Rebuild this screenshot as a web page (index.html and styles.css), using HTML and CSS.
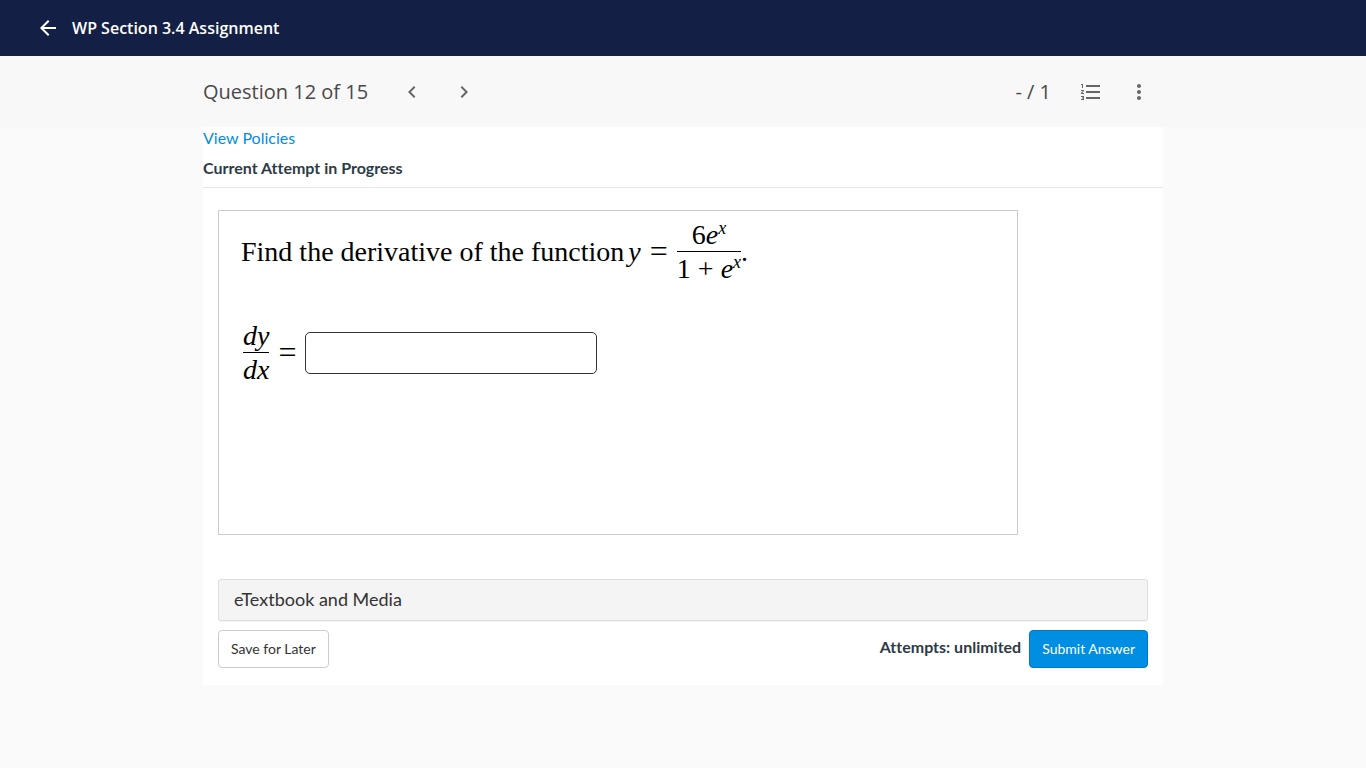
FILE: index.html
```html
<!DOCTYPE html>
<html lang="en">
<head>
<meta charset="utf-8">
<meta name="viewport" content="width=device-width, initial-scale=1">
<title>WP Section 3.4 Assignment</title>
<link rel="stylesheet" href="styles.css">
</head>
<body>
<header class="topbar">
  <a class="back" href="#" aria-label="Back">
    <svg class="icon" viewBox="0 0 24 24"><path d="M20 11H7.83l5.59-5.59L12 4l-8 8 8 8 1.41-1.41L7.83 13H20v-2z"/></svg>
  </a>
  <h1 class="topbar-title">WP Section 3.4 Assignment</h1>
</header>
<nav class="questionbar" aria-label="Question navigation">
  <div class="questionbar-inner">
    <h2 class="question-title">Question 12 of 15</h2>
    <button class="icon-button previous" type="button" aria-label="Previous question">
      <svg class="icon" viewBox="0 0 24 24"><path d="M15.41 7.41L14 6l-6 6 6 6 1.41-1.41L10.83 12z"/></svg>
    </button>
    <button class="icon-button next" type="button" aria-label="Next question">
      <svg class="icon" viewBox="0 0 24 24"><path d="M10 6L8.59 7.41 13.17 12l-4.58 4.59L10 18l6-6z"/></svg>
    </button>
    <span class="score">- / 1</span>
    <button class="icon-button list" type="button" aria-label="Question list">
      <svg class="icon" viewBox="0 0 24 24"><path d="M2 17h2v.5H3v1h1v.5H2v1h3v-4H2v1zm1-9h1V4H2v1h1v3zm-1 3h1.800L2 13.100v.9h3v-1H3.200L5 10.900V10H2v1zm5-6v2h14V5H7zm0 14h14v-2H7v2zm0-6h14v-2H7v2z"/></svg>
    </button>
    <button class="icon-button more" type="button" aria-label="More options">
      <svg class="icon" viewBox="0 0 24 24"><path d="M12 8c1.100 0 2-.9 2-2s-.9-2-2-2-2 .9-2 2 .9 2 2 2zm0 2c-1.100 0-2 .9-2 2s.9 2 2 2 2-.9 2-2-.9-2-2-2zm0 6c-1.100 0-2 .9-2 2s.9 2 2 2 2-.9 2-2-.9-2-2-2z"/></svg>
    </button>
  </div>
</nav>
<main class="content">
  <a class="policies" href="#">View Policies</a>
  <h3 class="attempt">Current Attempt in Progress</h3>
  <form class="question">
    <div class="problem">
      <p class="math">
        <span class="prompt">Find the derivative of the function</span>
        <i class="variable">y</i>
        <span class="equals">=</span>
        <span class="fraction"><span class="numerator">6<i>e</i><sup><i>x</i></sup></span><span class="denominator">1 + <i>e</i><sup><i>x</i></sup></span></span><span>.</span>
      </p>
      <div class="math answer">
        <label class="answer-label" for="answer">
          <span class="fraction"><i class="numerator">dy</i><i class="denominator">dx</i></span>
          <span class="equals">=</span>
        </label>
        <input class="answer-input" id="answer" type="text">
      </div>
    </div>
    <button class="media" type="button">eTextbook and Media</button>
    <div class="actions">
      <button class="button" type="button">Save for Later</button>
      <span class="attempts">Attempts: unlimited</span>
      <button class="button primary" type="submit">Submit Answer</button>
    </div>
  </form>
</main>
</body>
</html>
```
FILE: styles.css
```css
* { box-sizing: border-box; }

body {
  margin: 0;
  background: #fafafa;
  color: #2d3b45;
  font-family: Lato, "Liberation Sans", sans-serif;
  font-size: 16px;
  font-variant-ligatures: none;
  line-height: 24px;
}

h1, h2, h3, p { margin: 0; }
button {
  font-family: inherit;
  font-variant-ligatures: none;
  cursor: pointer;
}

.icon {
  display: block;
  width: 24px;
  height: 24px;
  fill: currentColor;
}

.topbar {
  display: flex;
  align-items: center;
  gap: 12px;
  height: 56px;
  padding: 0 36px;
  background: #131f45;
  color: #fff;
}

.back { color: inherit; }

.topbar-title {
  font: 600 16px/24px "Open Sans", sans-serif;
}

.questionbar { background: #f8f8f8; }

.questionbar-inner {
  display: flex;
  align-items: center;
  max-width: 960px;
  height: 71px;
  margin: 0 auto;
  color: #494949;
  font: 20px/28px "Open Sans", sans-serif;
}

.question-title {
  font-size: inherit;
  font-weight: 400;
}

.icon-button {
  padding: 0;
  border: 0;
  background: none;
  color: #666;
}

.previous { margin-left: 32px; }
.next { margin-left: 28px; }
.score { margin-left: auto; }
.list { margin-left: 28px; }
.more { margin: 0 12px 0 24px; }

.content {
  max-width: 960px;
  margin: 0 auto;
  background: #fff;
}

.policies {
  display: block;
  width: max-content;
  color: #008ee2;
  line-height: 22px;
  text-decoration: none;
}

.attempt {
  padding: 7px 0;
  border-bottom: 1px solid #e8e8e8;
  font-size: 16px;
  font-weight: 700;
}

.question { padding: 22px 15px 17px; }

.problem {
  max-width: 800px;
  min-height: 325px;
  padding: 7px 22px;
  border: 1px solid #ccc;
}

.math {
  display: flex;
  align-items: center;
  color: #000;
  font: 28px/33px "Liberation Serif", serif;
}

.prompt { margin-right: 4px; }

.equals {
  padding: 0 9px;
  font-size: 32px;
}

.fraction {
  display: inline-flex;
  flex-direction: column;
  align-items: stretch;
  text-align: center;
}

.numerator { border-bottom: 1px solid #000; }

.math sup {
  font-size: 18px;
  line-height: 0;
}

.answer { margin: 34px 2px 0; }

.answer-label {
  display: flex;
  align-items: center;
}

.answer-input {
  width: 292px;
  height: 42px;
  padding: 4px 8px;
  border: 1px solid #333;
  border-radius: 5px;
  background: #fff;
  font: inherit;
}

.media {
  display: block;
  width: 100%;
  margin-top: 44px;
  padding: 7px 15px 9px;
  border: 1px solid #ddd;
  border-radius: 3px;
  background: #f4f4f4;
  box-shadow: 0 1px 1px #0000000d;
  color: #333;
  font-size: 18px;
  line-height: 24px;
  text-align: left;
}

.actions {
  display: flex;
  align-items: center;
  margin-top: 9px;
}

.button {
  padding: 8px 12px;
  border: 1px solid #ccc;
  border-radius: 4px;
  background: #fff;
  color: #333;
  font-size: 14px;
  line-height: 20px;
}

.attempts {
  margin: 0 8px 4px auto;
  font-weight: 700;
}

.primary {
  border-color: #0079c1;
  background: #008ee2;
  color: #fff;
}
```
